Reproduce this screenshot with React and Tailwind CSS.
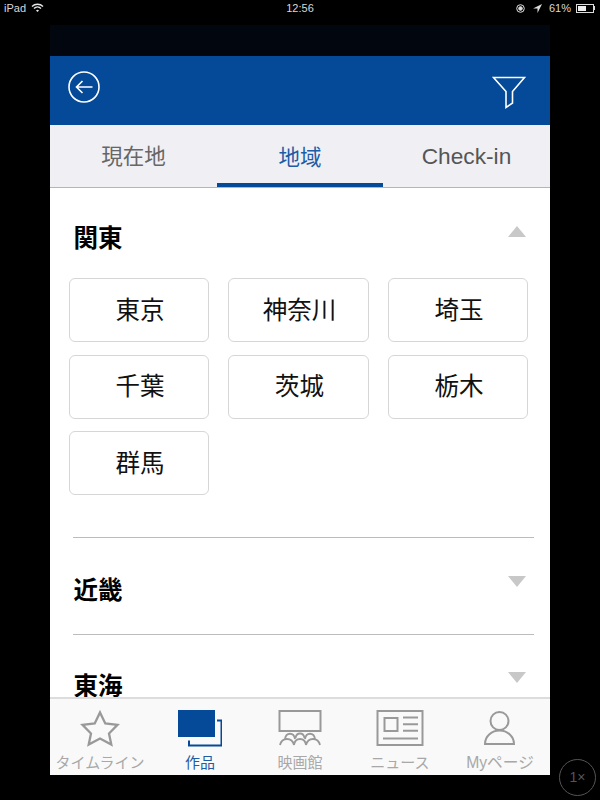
const BackIcon = () => (
    <svg width="32" height="32" viewBox="0 0 32 32" fill="none" stroke="white" strokeWidth="1.6">
        <circle cx="16" cy="16" r="15" />
        <path d="M24.500 16H8.500M14.500 10L8.500 16L14.500 22" />
    </svg>
)

const FilterIcon = () => (
    <svg width="34" height="34" viewBox="0 0 34 34" fill="none" stroke="white" strokeWidth="1.6">
        <path d="M1.500 1.500H32.500L20.500 15.500V27L14 31.500V15.500Z" />
    </svg>
)

const StarIcon = () => (
    <svg width="40" height="38" viewBox="0 0 40 38" fill="none" stroke="#999" strokeWidth="2.300">
        <path d="M20 3.500L25.300 14.500L37.500 15.800L29 24.500L31.300 35.500L20 29.500L8.700 35.500L11 24.500L2.500 15.800L14.700 14.500Z" />
    </svg>
)

const WorksIcon = () => (
    <svg width="44" height="37" viewBox="0 0 44 37">
        <rect x="0" y="0" width="37" height="27" fill="#044a99" />
        <path d="M39 10.500H43.500V35.500H11V30.500" fill="none" stroke="#044a99" strokeWidth="2" />
    </svg>
)

const TheaterIcon = () => (
    <svg width="44" height="36" viewBox="0 0 44 36" fill="none" stroke="#999" strokeWidth="2">
        <rect x="1.500" y="1" width="41" height="20" />
        <path d="M7 29c1-7 9-7 10 0M17.500 28c1-6 8-6 9 0M27 29c1-7 9-7 10 0" strokeWidth="1.800" />
        <path d="M2 35c2-8 12-8 14 0c1-8 11-8 12 0c2-8 12-8 14 0" strokeWidth="1.800" />
    </svg>
)

const NewsIcon = () => (
    <svg width="48" height="38" viewBox="0 0 48 38" fill="none" stroke="#999" strokeWidth="2">
        <rect x="1.500" y="2" width="45" height="34" />
        <rect x="8.500" y="9" width="13" height="13" />
        <path d="M27 8.500H42M27 15.200H42M27 21.800H42M7 29.500H42" />
    </svg>
)

const UserIcon = () => (
    <svg width="34" height="36" viewBox="0 0 34 36" fill="none" stroke="#999" strokeWidth="2">
        <circle cx="16.500" cy="11" r="9" />
        <path d="M2 34C2 26 9 20.500 16.500 20.500S31 26 31 34Z" />
    </svg>
)

const Section = ({ title, open, children }) => (
    <div>
        <div className="flex h-[26px] items-center justify-between">
            <h2 className="pl-[23.500px] text-[24.500px] font-bold text-black">{title}</h2>
            {open ? (
                <div className="mr-[24px] mb-[16px] h-0 w-0 border-x-[9px] border-b-[11px] border-x-transparent border-b-[#c8c8c8]" />
            ) : (
                <div className="mr-[24px] mb-[20px] h-0 w-0 border-x-[9px] border-t-[11px] border-x-transparent border-t-[#c8c8c8]" />
            )}
        </div>
        {children}
    </div>
)

const prefectures = ['東京', '神奈川', '埼玉', '千葉', '茨城', '栃木', '群馬']

const tabs = [
    { label: 'タイムライン', icon: <StarIcon /> },
    { label: '作品', icon: <WorksIcon />, active: true },
    { label: '映画館', icon: <TheaterIcon /> },
    { label: 'ニュース', icon: <NewsIcon /> },
    { label: 'Myページ', icon: <UserIcon />, wide: true },
]

export default function App() {
    return (
        <div className="relative flex h-[800px] w-[600px] flex-col overflow-hidden bg-black font-['Liberation_Sans','Noto_Sans_CJK_JP',sans-serif]">
            {/* Status bar */}
            <div className="flex h-[25px] items-start justify-between px-[4px] pt-[1px] text-[11px] leading-[14px] text-[#d8d8d8]">
                <div className="flex w-[150px] items-center gap-[5px]">
                    <span>iPad</span>
                    <svg width="13" height="10" viewBox="0 0 13 10" fill="none" stroke="#e8e8e8" strokeWidth="1.400">
                        <path d="M1 3.500c3-3 8-3 11 0M3 5.500c2-2 5-2 7 0" />
                        <path d="M5 7.500c1-1 2-1 3 0L6.500 9Z" fill="#e8e8e8" stroke="none" />
                    </svg>
                </div>
                <span className="font-medium">12:56</span>
                <div className="flex w-[150px] items-center justify-end gap-[5px] pr-[1px]">
                    <svg width="9" height="9" viewBox="0 0 9 9" fill="none" stroke="#ddd" strokeWidth="1">
                        <circle cx="4.500" cy="4.500" r="3.800" />
                        <circle cx="4.500" cy="4.500" r="1.800" fill="#ddd" />
                    </svg>
                    <svg width="9" height="9" viewBox="0 0 9 9" className="ml-[3px]">
                        <path d="M9 0L0 4.500H4.500V9Z" fill="#ddd" />
                    </svg>
                    <span className="ml-[2px]">61%</span>
                    <div className="flex items-center">
                        <div className="h-[9px] w-[18px] border border-[#ddd] p-[1px]">
                            <div className="h-full w-[60%] bg-[#eee]" />
                        </div>
                        <div className="h-[4px] w-[1px] bg-[#ddd]" />
                    </div>
                </div>
            </div>

            {/* App window */}
            <div className="mx-auto flex h-[750px] w-[500px] flex-col overflow-hidden bg-white">
                <div className="h-[31px] shrink-0 bg-[#01060f]" />

                <div className="flex h-[69px] shrink-0 items-start justify-between bg-[#044a99] pt-[15px] pr-[24px] pl-[18px]">
                    <BackIcon />
                    <div className="pt-[5px]"><FilterIcon /></div>
                </div>

                <div className="flex h-[63px] shrink-0 border-b border-[#b5b5b8] bg-[#efeff4] text-[21.500px]">
                    <div className="flex w-[167px] items-center justify-center pt-[3px] text-[#666]">現在地</div>
                    <div className="flex w-[166px] items-center justify-center border-b-[4px] border-[#044a99] pt-[9px] text-[#1e5ca6]">地域</div>
                    <div className="flex w-[167px] items-center justify-center pt-[1px] text-[22.700px] text-[#555]">Check-in</div>
                </div>

                {/* Regions */}
                <div className="min-h-0 flex-1 overflow-hidden pt-[38px]">
                    <Section title="関東" open>
                        <div className="mt-[26px] grid grid-cols-[140px_141px_140px] gap-x-[19px] gap-y-[12.500px] pl-[19px]">
                            {prefectures.map((name) => (
                                <div key={name} className="flex h-[64px] items-center justify-center rounded-[6px] border border-[#d6d6d6] pt-[2px] pl-[2px] text-[24.500px] text-[#111]">
                                    {name}
                                </div>
                            ))}
                        </div>
                    </Section>
                    <div className="mt-[42px] mr-[16px] ml-[23px] border-t border-[#bcbcbc]" />
                    <div className="pt-[40px]"><Section title="近畿" /></div>
                    <div className="mt-[30px] mr-[16px] ml-[23px] border-t border-[#bcbcbc]" />
                    <div className="pt-[39px]"><Section title="東海" /></div>
                </div>

                {/* Tab bar */}
                <div className="flex h-[78px] shrink-0 border-t-2 border-[#dcdcdc] bg-[#f9f9f9]">
                    {tabs.map((tab) => (
                        <div key={tab.label} className="flex w-[100px] flex-col items-center pt-[3px]">
                            <div className="flex h-[52px] items-center justify-center">{tab.icon}</div>
                            <span className={tab.active ? 'text-[15px] leading-[18px] text-[#1e5ca6]' : tab.wide ? 'text-[15.700px] leading-[18px] whitespace-nowrap text-[#a8a8a8]' : 'text-[15px] leading-[18px] whitespace-nowrap text-[#a8a8a8]'}>
                                {tab.label}
                            </span>
                        </div>
                    ))}
                </div>
            </div>

            {/* Zoom button */}
            <div className="absolute top-[759px] left-[559px] flex h-[37px] w-[37px] items-center justify-center rounded-full border border-[#555] text-[14px] text-[#555]">
                1×
            </div>
        </div>
    )
}
